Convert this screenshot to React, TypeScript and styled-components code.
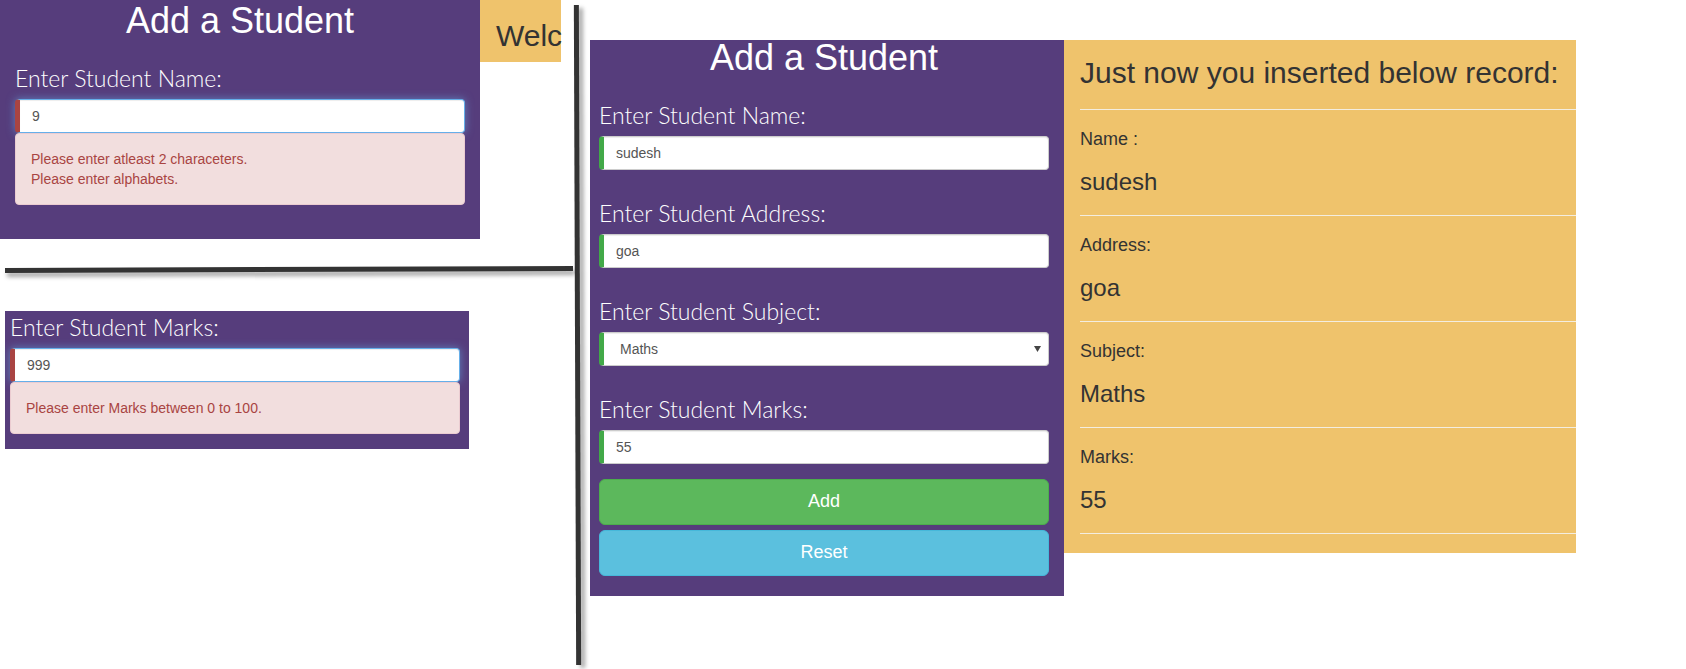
import React from 'react';
import styled, { createGlobalStyle } from 'styled-components';

const GlobalStyle = createGlobalStyle`
  html, body { margin: 0; padding: 0; background: #fff; }
  body {
    font-family: "Liberation Sans", Arial, sans-serif;
    font-size: 14px;
    line-height: 1.42857;
    color: #333;
  }
  * { box-sizing: border-box; }
`;

const PURPLE = '#563d7c';
const YELLOW = '#efc36c';

const Page = styled.div`
  display: flex;
  align-items: flex-start;
  width: 1686px;
  height: 669px;
  overflow: hidden;
`;

const LeftColumn = styled.div`
  flex: none;
  width: 575px;
  display: flex;
  flex-direction: column;
`;

const TopRow = styled.div`
  display: flex;
  align-items: flex-start;
`;

const FormPanel = styled.div<{ $width: number; $pad: string }>`
  flex: none;
  width: ${(p) => p.$width}px;
  padding: ${(p) => p.$pad};
  background: ${PURPLE};
  display: flex;
  flex-direction: column;
`;

const BottomPanel = styled(FormPanel)`
  margin: 39px 0 0 5px;
`;

const Title = styled.h1<{ $gap: number }>`
  margin: 0 0 ${(p) => p.$gap}px;
  font-family: "Liberation Sans", Arial, sans-serif;
  font-size: 36px;
  font-weight: 400;
  line-height: 36px;
  color: #fff;
  text-align: center;
`;

const WelcomeBox = styled.div`
  flex: none;
  width: 81px;
  height: 62px;
  padding: 19px 0 0 16px;
  background: ${YELLOW};
  white-space: nowrap;
`;

const Heading = styled.h3`
  margin: 0;
  font-family: "Liberation Sans", Arial, sans-serif;
  font-size: 30px;
  font-weight: 400;
  line-height: 33px;
  color: #333;
`;

const FieldLabel = styled.label`
  display: block;
  margin: 0 0 6px;
  font-family: Lato, "Open Sans", sans-serif;
  font-weight: 300;
  font-size: 23px;
  line-height: 30px;
  color: #fff;
`;

const Field = styled.div<{ $gap?: number }>`
  display: flex;
  flex-direction: column;
  margin-top: ${(p) => p.$gap ?? 0}px;
`;

const TextInput = styled.input<{ $state: 'valid' | 'invalid'; $focus?: boolean }>`
  display: block;
  width: 100%;
  height: 34px;
  padding: 6px 12px;
  font-family: "Liberation Sans", Arial, sans-serif;
  font-size: 14px;
  color: #555;
  background: #fff;
  border: 1px solid ${(p) => (p.$focus ? '#66afe9' : '#ccc')};
  border-left: 5px solid ${(p) => (p.$state === 'valid' ? '#42a948' : '#a94442')};
  border-radius: 4px;
  box-shadow: inset 0 1px 1px rgba(0, 0, 0, 0.075)
    ${(p) => (p.$focus ? ', 0 0 8px rgba(102, 175, 233, 0.6)' : '')};
  outline: none;
`;

const SelectWrap = styled.div`
  position: relative;
`;

const Select = styled.select`
  display: block;
  width: 100%;
  height: 34px;
  padding: 6px 12px 6px 16px;
  font-family: "Liberation Sans", Arial, sans-serif;
  font-size: 14px;
  color: #555;
  background: #fff;
  border: 1px solid #ccc;
  border-left: 5px solid #42a948;
  border-radius: 4px;
  box-shadow: inset 0 1px 1px rgba(0, 0, 0, 0.075);
  appearance: none;
  -webkit-appearance: none;
  outline: none;
`;

const Caret = styled.svg`
  position: absolute;
  right: 8px;
  top: 14px;
  pointer-events: none;
`;

const Alert = styled.div`
  padding: 15px;
  border: 1px solid #ebccd1;
  border-radius: 4px;
  background: #f2dede;
  color: #a94442;
  font-family: "Liberation Sans", Arial, sans-serif;
  font-size: 14px;
  line-height: 20px;
`;

const Button = styled.button<{ $variant: 'success' | 'info'; $gap: number }>`
  display: block;
  width: 100%;
  height: 46px;
  margin-top: ${(p) => p.$gap}px;
  padding: 10px 16px;
  font-family: "Liberation Sans", Arial, sans-serif;
  font-size: 18px;
  line-height: 1.3333;
  color: #fff;
  text-align: center;
  border-radius: 6px;
  border: 1px solid ${(p) => (p.$variant === 'success' ? '#4cae4c' : '#46b8da')};
  background: ${(p) => (p.$variant === 'success' ? '#5cb85c' : '#5bc0de')};
  cursor: pointer;
`;

const HDivider = styled.div`
  width: 568px;
  height: 5px;
  margin: 28px 0 0 5px;
  background: #333;
  box-shadow: 2px 4px 4px rgba(0, 0, 0, 0.35);
  transform: rotate(-0.2deg);
`;

const VDivider = styled.div`
  flex: none;
  width: 5px;
  height: 660px;
  margin-top: 5px;
  background: #333;
  box-shadow: 4px 3px 4px rgba(0, 0, 0, 0.35);
  transform: rotate(-0.2deg);
`;

const RightArea = styled.div`
  display: flex;
  align-items: flex-start;
  margin: 40px 0 0 10px;
`;

const ResultPanel = styled.div`
  flex: none;
  width: 512px;
  padding: 16px 0 19px 16px;
  background: ${YELLOW};
`;

const ResultHeading = styled(Heading)`
  padding-bottom: 20px;
  border-bottom: 1px solid #f3ede0;
`;

const Entry = styled.div`
  padding: 19px 0 20px;
  border-bottom: 1px solid #f3ede0;
`;

const EntryLabel = styled.div`
  font-size: 18px;
  line-height: 20px;
  color: #333;
`;

const EntryValue = styled.div`
  margin-top: 20px;
  font-size: 24px;
  line-height: 26px;
  color: #333;
`;

const records = [
  { label: 'Name :', value: 'sudesh' },
  { label: 'Address:', value: 'goa' },
  { label: 'Subject:', value: 'Maths' },
  { label: 'Marks:', value: '55' },
];

export default function App() {
  return (
    <>
      <GlobalStyle />
      <Page>
        <LeftColumn>
          <TopRow>
            <FormPanel $width={480} $pad="3px 15px 34px 15px">
              <Title $gap={24}>Add a Student</Title>
              <Field>
                <FieldLabel>Enter Student Name:</FieldLabel>
                <TextInput $state="invalid" $focus readOnly defaultValue="9" />
                <Alert>
                  Please enter atleast 2 characeters.
                  <br />
                  Please enter alphabets.
                </Alert>
              </Field>
            </FormPanel>
            <WelcomeBox>
              <Heading>Welc</Heading>
            </WelcomeBox>
          </TopRow>
          <HDivider />
          <BottomPanel $width={464} $pad="1px 9px 15px 5px">
            <Field>
              <FieldLabel>Enter Student Marks:</FieldLabel>
              <TextInput $state="invalid" $focus readOnly defaultValue="999" />
              <Alert>Please enter Marks between 0 to 100.</Alert>
            </Field>
          </BottomPanel>
        </LeftColumn>
        <VDivider />
        <RightArea>
          <FormPanel $width={474} $pad="0 15px 20px 9px">
            <Title $gap={24}>Add a Student</Title>
            <Field>
              <FieldLabel>Enter Student Name:</FieldLabel>
              <TextInput $state="valid" readOnly defaultValue="sudesh" />
            </Field>
            <Field $gap={28}>
              <FieldLabel>Enter Student Address:</FieldLabel>
              <TextInput $state="valid" readOnly defaultValue="goa" />
            </Field>
            <Field $gap={28}>
              <FieldLabel>Enter Student Subject:</FieldLabel>
              <SelectWrap>
                <Select defaultValue="Maths">
                  <option>Maths</option>
                  <option>Science</option>
                  <option>English</option>
                </Select>
                <Caret width="7" height="6" viewBox="0 0 7 6">
                  <polygon points="0,0 7,0 3.5,6" fill="#444" />
                </Caret>
              </SelectWrap>
            </Field>
            <Field $gap={28}>
              <FieldLabel>Enter Student Marks:</FieldLabel>
              <TextInput $state="valid" readOnly defaultValue="55" />
            </Field>
            <Button $variant="success" $gap={15}>Add</Button>
            <Button $variant="info" $gap={5}>Reset</Button>
          </FormPanel>
          <ResultPanel>
            <ResultHeading>Just now you inserted below record:</ResultHeading>
            {records.map((r) => (
              <Entry key={r.label}>
                <EntryLabel>{r.label}</EntryLabel>
                <EntryValue>{r.value}</EntryValue>
              </Entry>
            ))}
          </ResultPanel>
        </RightArea>
      </Page>
    </>
  );
}
